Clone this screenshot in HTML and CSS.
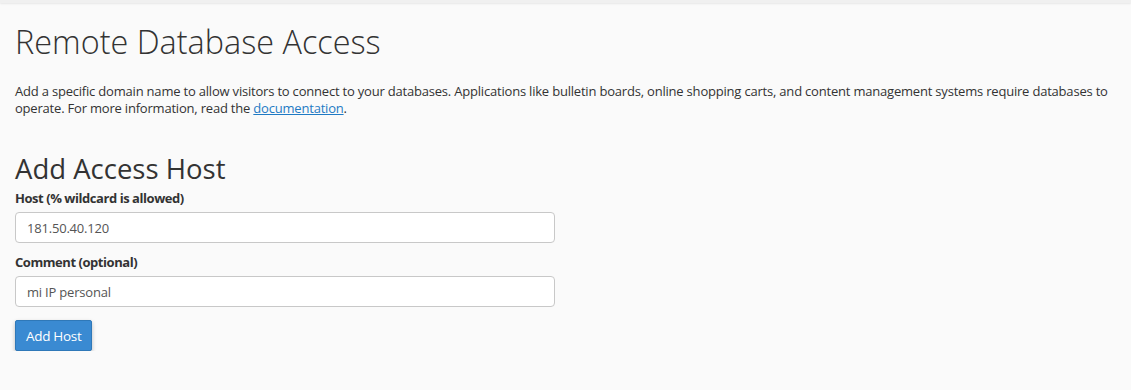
FILE: index.html
```html
<!DOCTYPE html>
<html lang="en">
<head>
    <meta charset="UTF-8">
    <title>Remote Database Access</title>
    <link rel="stylesheet" href="styles.css">
</head>
<body>
    <div class="topbar"></div>
    <div id="content">
        <h1 class="page-title">Remote Database Access</h1>
        <p class="description">Add a specific domain name to allow visitors to connect to your databases. Applications like bulletin boards, online shopping carts, and content management systems require databases to operate. For more information, read the <a href="#">documentation</a>.</p>
        <h2 class="section-title">Add Access Host</h2>
        <form id="addHostForm">
            <div class="form-group">
                <label for="host">Host (% wildcard is allowed)</label>
                <input type="text" id="host" class="form-control" value="181.50.40.120">
            </div>
            <div class="form-group">
                <label for="comment">Comment (optional)</label>
                <input type="text" id="comment" class="form-control" value="mi IP personal">
            </div>
            <button type="submit" class="btn-primary">Add Host</button>
        </form>
    </div>
</body>
</html>
```

FILE: styles.css
```css
body {
    background-color: #fafafa;
    font-family: "Open Sans", Arial, sans-serif;
    font-size: 13px;
    letter-spacing: -0.2px;
    color: #333333;
    margin: 0;
    padding: 0;
}
.topbar {
    height: 3px;
    background-color: #f0f0f0;
    box-shadow: 0 1px 2px rgba(0, 0, 0, 0.08);
}
#content {
    padding: 0 15px;
}
.page-title {
    font-size: 32.4px;
    font-weight: 300;
    letter-spacing: 0;
    margin: 18px 0 0;
    line-height: 40px;
}
.description {
    line-height: 17px;
    margin: 22px 0 0;
}
.description a {
    color: #1f7ac4;
}
.section-title {
    font-size: 27.5px;
    font-weight: 400;
    letter-spacing: 0;
    margin: 36px 0 0;
    line-height: 32px;
}
.form-group {
    margin-bottom: 10px;
}
label {
    display: block;
    font-weight: 700;
    letter-spacing: -0.45px;
    margin: 4px 0 5px;
}
.form-control {
    display: block;
    box-sizing: border-box;
    width: 540px;
    height: 31px;
    padding: 5px 11px;
    font-family: "Open Sans", Arial, sans-serif;
    font-size: 13px;
    letter-spacing: -0.2px;
    color: #555555;
    background-color: #ffffff;
    border: 1px solid #c8c8c8;
    border-radius: 4px;
}
.btn-primary {
    background-color: #3a8ad2;
    color: #ffffff;
    border: 1px solid #2f78b8;
    border-radius: 2px;
    margin-top: 3px;
    padding: 5px 10px;
    height: 31px;
    font-family: "Open Sans", Arial, sans-serif;
    font-size: 13.5px;
    letter-spacing: -0.3px;
    box-shadow: 0 2px 4px rgba(0, 0, 0, 0.25);
    cursor: pointer;
}
```
